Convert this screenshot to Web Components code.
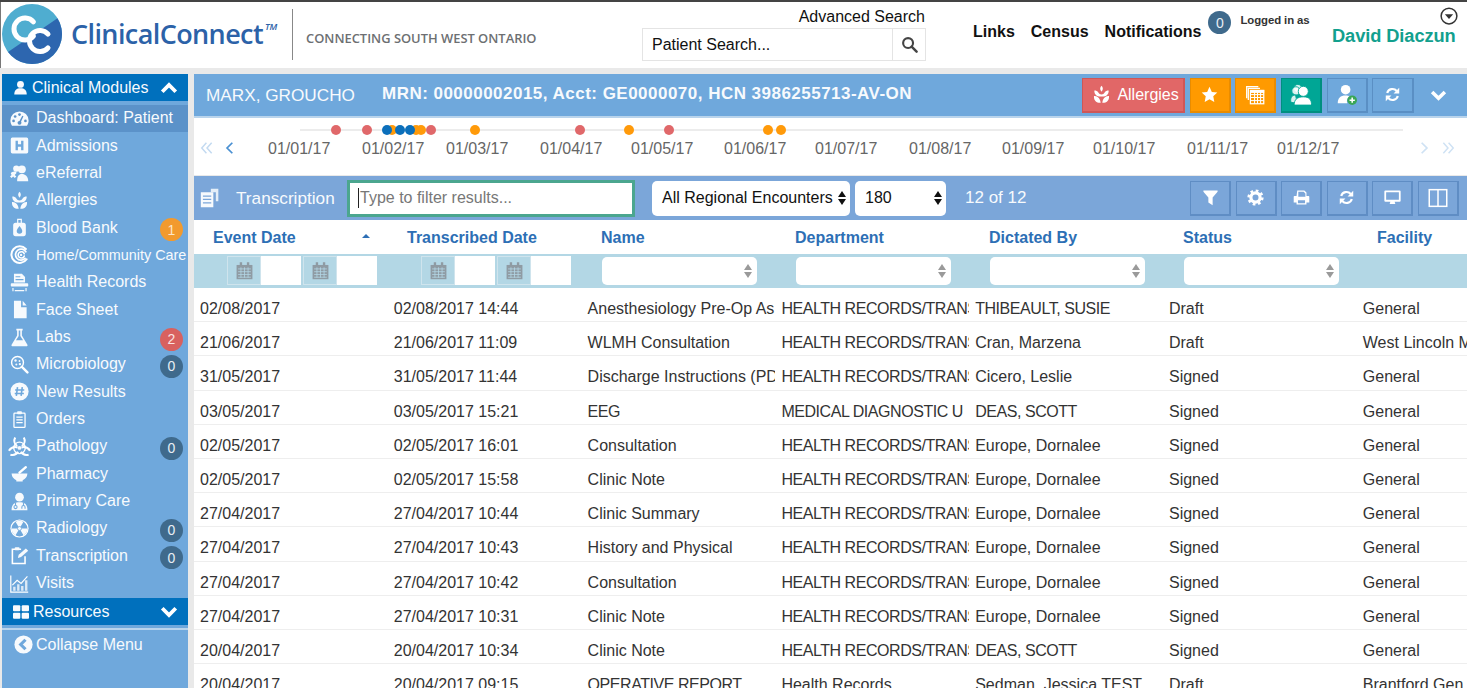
<!DOCTYPE html>
<html lang="en">
<head>
<meta charset="utf-8">
<title>ClinicalConnect</title>
<style>
  html, body { margin: 0; height: 688px; overflow: hidden; background: #e9e9e9; font-family: "Liberation Sans", Arial, sans-serif; }
</style>
</head>
<body>
<cc-app></cc-app>
<script>
const ICONS = {
  user: '<circle cx="12" cy="7" r="5.5"/><path d="M2 23c0-7 4-10 10-10s10 3 10 10z"/>',
  gauge: '<path d="M12 3A11.500 11.500 0 0 0 .5 14.500c0 2.500.8 4.800 2 6.500h19c1.200-1.700 2-4 2-6.500A11.500 11.500 0 0 0 12 3z"/><g fill="#5b92c9"><circle cx="12" cy="7" r="1.700"/><circle cx="6.500" cy="9.500" r="1.700"/><circle cx="4.500" cy="15" r="1.700"/><circle cx="19.500" cy="15" r="1.700"/><circle cx="12" cy="17.500" r="2.500"/><path d="M11 17l4.500-8.500 1.500.7-4 8.800z"/></g>',
  hospital: '<path fill-rule="evenodd" d="M3 2h18a2 2 0 0 1 2 2v16a2 2 0 0 1-2 2H3a2 2 0 0 1-2-2V4a2 2 0 0 1 2-2zM7 6v12h3v-4.500h4V18h3V6h-3v4.500h-4V6z"/>',
  group: '<circle cx="8" cy="7" r="4"/><circle cx="15" cy="8" r="5"/><path d="M9 23c0-6 2-9 6-9s8 3 8 9z"/><path d="M1 13c1-2 4-3 7-2v2l-2 2 2 2-2 2-2-2-2 2-2-2 2-2z"/>',
  plant: '<path d="M12 1c2 2 2.500 4.500 0 7.500C9.500 5.500 10 3 12 1z"/><path d="M3 7c2 0 4 .8 5 2.500C9 11 10 12 12 12s3-1 4-2.500C17 7.800 19 7 21 7c.3 2-.5 5-3 6.500-2 1-4.500 1-6 1s-4 0-6-1C3.500 12 2.700 9 3 7z"/><path d="M2.500 14c3 0 7.500 1 8.500 8.500-4 .5-9-1.500-8.500-8.500zM21.500 14c-3 0-7.500 1-8.500 8.500 4 .5 9-1.500 8.500-8.500z"/>',
  bag: '<path fill-rule="evenodd" d="M9 1h6v5h2c2 0 3 1.500 3 3v11c0 2-1 3-3 3H7c-2 0-3-1-3-3V9c0-1.500 1-3 3-3h2zM10.500 2.500V6h3V2.500zM12 10c-2 3-3.500 4.500-3.500 6.500a3.500 3.500 0 0 0 7 0C15.500 14.500 14 13 12 10z"/>',
  swirl: '<g fill="none" stroke="#fff" stroke-linecap="round"><path stroke-width="2.600" d="M20 5A10.500 10.500 0 1 0 21 18"/><path stroke-width="2.200" d="M20 8.500A7 7 0 1 0 19 17"/><path stroke-width="2" d="M18 11a4 4 0 1 0 0 3"/></g><circle cx="14" cy="12.500" r="1.500"/>',
  shred: '<path fill-rule="evenodd" d="M5 1h10l4 4v7H5zM7 4v1.500h6V4zM7 7.500V9h10V7.500z"/><rect x="1" y="13" width="22" height="4" rx="1"/><path d="M3 19h1.500v4H3zM19.500 19H21v4h-1.500zM6 21.500h12V23H6z"/>',
  file: '<path d="M5 1h9v8h7v14H5z"/><path d="M16 1l5 6h-5z"/>',
  flask: '<path fill-rule="evenodd" d="M8 1h8v2h-1v6.500l7 11.500c.6 1-.2 2-1.200 2H3.200C2.200 23 1.400 22 2 21l7-11.500V3H8zM11 3v7L7.500 15.500h9L13 10V3z"/>',
  microbe: '<circle cx="9.500" cy="9.500" r="7.500" fill="none" stroke="#fff" stroke-width="1.800"/><path d="M15 15l7 7" stroke="#fff" stroke-width="3" stroke-linecap="round"/><g><circle cx="7" cy="7" r="1.500"/><circle cx="12" cy="7.500" r="1.200"/><circle cx="8" cy="12" r="1.300"/><circle cx="12.500" cy="11.500" r="1.500"/></g>',
  hash: '<circle cx="12" cy="12" r="11.500"/><path d="M9.500 6.500l-1.500 11M15.500 6.500l-1.500 11M6.500 10h11.500M6 14.500h11.500" stroke="#6fa8dc" stroke-width="2" fill="none"/>',
  clipboard: '<g fill="none" stroke="#fff" stroke-width="1.600"><rect x="5" y="4" width="14" height="18" rx="1"/><path d="M8 9h8M8 12.500h8M8 16h8"/></g><rect x="9" y="1.500" width="6" height="4" rx="1"/>',
  biohazard: '<g fill="none" stroke="#fff" stroke-width="2.200"><path d="M7.500 2.500a7 7 0 0 0 2 9M16.500 2.500a7 7 0 0 1-2 9"/><path d="M1 16.500a7 7 0 0 1 9-3.500M2.500 20.500a7 7 0 0 0 8-3"/><path d="M23 16.500a7 7 0 0 0-9-3.500M21.500 20.500a7 7 0 0 1-8-3"/><circle cx="12" cy="13.500" r="6" stroke-width="1.400"/></g><circle cx="12" cy="13.500" r="2"/>',
  mortar: '<path d="M2 12h20a10 10 0 0 1-6 8.500V22H8v-1.500A10 10 0 0 1 2 12z"/><path d="M12 11L20 4" stroke="#fff" stroke-width="3" stroke-linecap="round"/>',
  doctor: '<circle cx="12" cy="6.500" r="5.500"/><path d="M2 23c0-7 3-10 10-10s10 3 10 10z"/><g fill="none" stroke="#6fa8dc" stroke-width="1.300"><path d="M7 14v3"/><circle cx="7" cy="19" r="2"/><path d="M17 14v3"/><path d="M15 21v-2a2 2 0 0 1 4 0v2"/></g>',
  radiation: '<circle cx="12" cy="12" r="11.500" fill="#fff"/><circle cx="12" cy="12" r="10" fill="#6fa8dc"/><path d="M12 12L7 3.500a10 10 0 0 1 10 0zM12 12l10 0a10 10 0 0 1-5 8.600zM12 12L7 20.600A10 10 0 0 1 2 12z"/><circle cx="12" cy="12" r="2.500" stroke="#6fa8dc"/>',
  note: '<path d="M14 4H3v18h16v-9" fill="none" stroke="#fff" stroke-width="2"/><rect x="6" y="1.500" width="6" height="4" rx="1"/><path d="M10 15l1-4 9-8 3 3-9 8z"/>',
  chart: '<path d="M1 2v21h22" fill="none" stroke="#fff" stroke-width="1.500"/><path d="M4 21v-5h3v5zM9 21v-8h3v8zM14 21v-6h3v6zM19 21V8h3v13z" opacity=".8"/><path d="M3 14l6-6 5 4 8-9" fill="none" stroke="#fff" stroke-width="1.500"/>',
  grid: '<rect x="0" y="2" width="11" height="9" rx="1.500"/><rect x="13" y="2" width="11" height="9" rx="1.500"/><rect x="0" y="13" width="11" height="9" rx="1.500"/><rect x="13" y="13" width="11" height="9" rx="1.500"/>',
  back: '<circle cx="12" cy="12" r="11.500"/><path d="M14.500 6l-6 6 6 6" fill="none" stroke="#6fa8dc" stroke-width="4"/>',
  up: '<path d="M3 17l9-9 9 9" fill="none" stroke="#fff" stroke-width="5"/>',
  down: '<path d="M3 7l9 9 9-9" fill="none" stroke="#fff" stroke-width="5"/>',
  star: '<path d="M12 1l3.300 7.300 7.700.9-5.700 5.400 1.500 7.900L12 18.600l-6.800 3.900 1.500-7.900L1 9.200l7.700-.9z"/>',
  calendars: '<g fill="none" stroke="#fff"><path stroke-width="1.500" d="M2 16V2h14M4 18V4h14"/><rect x="6.500" y="6.500" width="16" height="16" stroke-width="1.500"/><path stroke-width="1.200" d="M6.500 11.500h16M6.500 15h16M6.500 18.700h16M11.500 6.500v16M15 6.500v16M18.700 6.500v16"/></g><rect x="6" y="6" width="17" height="3.500"/>',
  people: '<g stroke="#00a695" stroke-width="1"><circle cx="8.500" cy="5" r="4.500" fill-opacity=".85"/><circle cx="6.500" cy="7.500" r="4.500" fill-opacity=".85"/><path fill-opacity=".85" d="M1 20c-1-5 1-8 5-8l2 9z"/><circle cx="14.500" cy="8" r="5.500"/><path d="M4.500 23c0-6 3.500-9 10-9s9 3 9 9z"/></g>',
  useradd: '<circle cx="11" cy="6.500" r="5.500"/><path d="M2 22c0-6 3-9 9-9 2 0 3.500.4 4.700 1.100A6 6 0 0 0 13 22z"/><circle cx="18.500" cy="18.500" r="5.500" fill="#3aa655"/><path d="M18.500 15.500v6M15.500 18.500h6" stroke="#fff" stroke-width="1.800"/>',
  refresh: '<g fill="none" stroke="#fff" stroke-width="3"><path d="M4.500 10A7.800 7.800 0 0 1 18 7"/><path d="M19.500 14A7.800 7.800 0 0 1 6 17"/></g><path d="M21.500 2.500v8h-8zM2.500 21.500v-8h8z"/>',
  docs: '<path d="M13 1h9v15h-3V5h-6z" opacity=".85"/><path fill-rule="evenodd" d="M1 5h15v18H1zM3.500 9v1.500h10V9zM3.500 13v1.500h10V13zM3.500 17v1.500h10V17z"/>',
  funnel: '<path d="M2 2h20v2l-7 8v11l-6-4v-7L2 4z"/>',
  gear: '<circle cx="12" cy="12" r="6.500" fill="none" stroke="#fff" stroke-width="4.500"/><circle cx="12" cy="12" r="9.700" fill="none" stroke="#fff" stroke-width="3.500" stroke-dasharray="3.800 3.820"/>',
  printer: '<path fill-rule="evenodd" d="M6 2h10l3 3v5h3a1 1 0 0 1 1 1v8h-4v3H5v-3H1v-8a1 1 0 0 1 1-1h3zM7.500 4v7h10V6.500L15 4zM7 16v4h10v-4z"/>',
  monitor: '<path fill-rule="evenodd" d="M2 2h20a1.500 1.500 0 0 1 1.500 1.500v13A1.500 1.500 0 0 1 22 18h-7l1 3H8l1-3H2a1.500 1.500 0 0 1-1.500-1.500v-13A1.500 1.500 0 0 1 2 2zM3 4.500V15h18V4.500z"/>',
  columns: '<rect x="1.500" y="2" width="21" height="20" fill="none" stroke="#fff" stroke-width="1.800"/><path d="M12 2v20" stroke="#fff" stroke-width="1.800"/>',
  calendar: '<path d="M2 5h20v18H2z"/><path d="M6 1.500h3V6H6zM15 1.500h3V6h-3z"/><path d="M4 10h16M4 13.500h16M4 17h16M4 20.500h16M7.500 8v13M12 8v13M16.500 8v13" stroke="#b3d7e5" stroke-width="1"/>',
  search: '<circle cx="10" cy="10" r="7" fill="none" stroke="currentColor" stroke-width="3"/><path d="M15 15l7 7" stroke="currentColor" stroke-width="3.500" stroke-linecap="round"/>',
  caretcircle: '<circle cx="12" cy="12" r="10.500" fill="none" stroke="currentColor" stroke-width="2"/><path d="M6.500 9.500h11L12 16z"/>',
  chevrons: '<path d="M11 3l-8 9 8 9M20 3l-8 9 8 9" fill="none" stroke="currentColor" stroke-width="2.500"/>',
  chevron: '<path d="M16 3l-9 9 9 9" fill="none" stroke="currentColor" stroke-width="3"/>'
};

class CcIcon extends HTMLElement {
  connectedCallback() {
    const size = this.getAttribute("size") || 18;
    const flip = this.hasAttribute("flip") ? "transform: scaleX(-1);" : "";
    this.attachShadow({ mode: "open" });
    this.shadowRoot.innerHTML = `
      <style>
        :host { display: inline-flex; flex: none; width: ${size}px; height: ${size}px; fill: currentColor; color: inherit; }
        svg { width: 100%; height: 100%; display: block; ${flip} }
      </style>
      <svg viewBox="0 0 24 24">${ICONS[this.getAttribute("name")] || ""}</svg>`;
  }
}
customElements.define("cc-icon", CcIcon);

class CcBadge extends HTMLElement {
  constructor() {
    super();
    this.attachShadow({ mode: "open" });
    this.shadowRoot.innerHTML = `
      <style>
        :host { display: inline-flex; flex: none; align-items: center; justify-content: center; width: 23px; height: 23px; border-radius: 50%; background: #3f6a8c; color: #e8eef4; font-size: 14px; }
        :host([tone="orange"]) { background: #f29a2e; color: #fde6c8; }
        :host([tone="red"]) { background: #d8615f; color: #fbe4e3; }
      </style>
      <slot></slot>`;
  }
}
customElements.define("cc-badge", CcBadge);

class CcHeader extends HTMLElement {
  constructor() {
    super();
    this.attachShadow({ mode: "open" });
    this.shadowRoot.innerHTML = `
      <style>
        :host { display: flex; height: 66px; background: #fff; border-top: 2px solid #444; color: #111; box-shadow: inset 1px 0 0 #777; }
        .logo { flex: none; margin: 2px 0 0 2px; width: 60px; height: 60px; }
        .brand { flex: none; margin: 15px 0 0 9px; font: 600 27px/34px "Open Sans", sans-serif; color: #2c62a8; letter-spacing: -.6px; width: 221px; white-space: nowrap; }
        .brand sup { font-size: 9px; font-style: italic; line-height: 0; vertical-align: 14px; letter-spacing: 0; margin-left: 2px; }
        .rule { flex: none; width: 1px; height: 51px; margin-top: 7px; background: #888; }
        .tag { flex: none; margin: 28px 0 0 13px; width: 336px; font: 600 12.9px/16px "Open Sans", sans-serif; color: #6d6f72; white-space: nowrap; }
        .search { flex: none; width: 284px; display: flex; flex-direction: column; }
        .adv { text-align: right; font-size: 16px; line-height: 18px; margin: 6px 1px 2px 0; }
        .box { height: 31px; display: flex; border: 1px solid #e4e4e4; font-size: 16px; align-items: center; }
        .box span { flex: 1; padding-left: 9px; }
        .box div { width: 32px; height: 100%; border-left: 1px solid #e4e4e4; display: flex; align-items: center; justify-content: center; color: #444; }
        .links { flex: none; display: flex; gap: 16px; margin: 20px 0 0 47px; font-weight: 700; font-size: 16px; line-height: 20px; }
        cc-badge { margin: 9px 0 0 7px; }
        .who { flex: 1; position: relative; margin-left: 9px; display: flex; flex-direction: column; }
        .who small { font-size: 11.4px; font-weight: 700; line-height: 14px; margin-top: 11px; color: #333; letter-spacing: -.1px; }
        .who strong { font-size: 18.3px; line-height: 22px; color: #12a08e; margin: -2px 0 0 91.5px; white-space: nowrap; letter-spacing: -.1px; }
        .caret { position: absolute; right: 9px; top: 5px; color: #333; }
      </style>
      <svg class="logo" viewBox="0 0 60 60">
        <circle cx="30" cy="30" r="30" fill="#4fadd0"/>
        <path d="M6 48L55.500 14.200A30 30 0 0 1 6 48z" fill="#2d66af"/>
        <g fill="none" stroke="#fff" stroke-width="5" stroke-linecap="round">
          <path d="M31.400 17.900A11 11 0 1 0 31.400 32.100"/>
          <path d="M46 30.200A10.500 10.500 0 1 0 46 43.800"/>
        </g>
      </svg>
      <div class="brand">ClinicalConnect<sup>TM</sup></div>
      <div class="rule"></div>
      <div class="tag">CONNECTING SOUTH WEST ONTARIO</div>
      <div class="search">
        <div class="adv">Advanced Search</div>
        <div class="box"><span>Patient Search...</span><div><cc-icon name="search" size="17"></cc-icon></div></div>
      </div>
      <div class="links"><a>Links</a><a>Census</a><a>Notifications</a></div>
      <cc-badge>0</cc-badge>
      <div class="who">
        <small>Logged in as</small>
        <strong>David Diaczun</strong>
        <cc-icon class="caret" name="caretcircle" size="18"></cc-icon>
      </div>`;
  }
}
customElements.define("cc-header", CcHeader);

class CcNavItem extends HTMLElement {
  constructor() {
    super();
    this.attachShadow({ mode: "open" });
    this.shadowRoot.innerHTML = `
      <style>
        :host { display: flex; align-items: center; height: 27.35px; color: #f7fafd; font-size: 16px; white-space: nowrap; }
        :host([active]) { background: #5b92c9; }
        .ic { flex: none; width: 34px; display: flex; justify-content: center; }
        .tx { flex: 1; min-width: 0; }
        :host([small]) .tx { font-size: 14.4px; }
        ::slotted(cc-badge) { margin: 4px 5px 0 0; }
      </style>
      <span class="ic"><slot name="icon"></slot></span>
      <span class="tx"><slot></slot></span>
      <slot name="badge"></slot>`;
  }
}
customElements.define("cc-nav-item", CcNavItem);

class CcNavHead extends HTMLElement {
  constructor() {
    super();
    this.attachShadow({ mode: "open" });
    this.shadowRoot.innerHTML = `
      <style>
        :host { display: flex; align-items: center; height: 27px; background: #0070bd; color: #f7fafd; font-size: 16px; padding: 0 10px 0 11px; gap: 4px; }
        .tx { flex: 1; }
      </style>
      <slot name="icon"></slot><span class="tx"><slot></slot></span><slot name="toggle"></slot>`;
  }
}
customElements.define("cc-nav-head", CcNavHead);

const NAV = [
  ["gauge", "Dashboard: Patient", "", "active"],
  ["hospital", "Admissions"],
  ["group", "eReferral"],
  ["plant", "Allergies"],
  ["bag", "Blood Bank", "1:orange"],
  ["swirl", "Home/Community Care", "", "small"],
  ["shred", "Health Records"],
  ["file", "Face Sheet"],
  ["flask", "Labs", "2:red"],
  ["microbe", "Microbiology", "0:"],
  ["hash", "New Results"],
  ["clipboard", "Orders"],
  ["biohazard", "Pathology", "0:"],
  ["mortar", "Pharmacy"],
  ["doctor", "Primary Care"],
  ["radiation", "Radiology", "0:"],
  ["note", "Transcription", "0:"],
  ["chart", "Visits"]
];

class CcSidebar extends HTMLElement {
  constructor() {
    super();
    this.attachShadow({ mode: "open" });
    const items = NAV.map(([icon, label, badge, flag]) => {
      let b = "";
      if (badge) {
        const [n, tone] = badge.split(":");
        b = `<cc-badge slot="badge" tone="${tone}">${n}</cc-badge>`;
      }
      return `<cc-nav-item ${flag || ""}><cc-icon slot="icon" name="${icon}" size="${icon === "biohazard" ? 23 : 19}"></cc-icon>${label}${b}</cc-nav-item>`;
    }).join("");
    this.shadowRoot.innerHTML = `
      <style>
        :host { display: block; flex: none; width: 186px; margin-left: 2px; background: #6fa8dc; }
        .list { margin-top: 3.6px; margin-bottom: 1.4px; }
        .sep { height: 2px; background: #b9d4ec; margin-top: 3px; }
        .collapse { display: flex; align-items: center; gap: 3px; margin-top: 1px; padding-left: 12px; height: 27px; color: #f7fafd; font-size: 16px; }
      </style>
      <cc-nav-head><cc-icon slot="icon" name="user" size="15"></cc-icon>Clinical Modules<cc-icon slot="toggle" name="up" size="18"></cc-icon></cc-nav-head>
      <div class="list">${items}</div>
      <cc-nav-head><cc-icon slot="icon" name="grid" size="16"></cc-icon>Resources<cc-icon slot="toggle" name="down" size="18"></cc-icon></cc-nav-head>
      <div class="sep"></div>
      <div class="collapse"><cc-icon name="back" size="19"></cc-icon>Collapse Menu</div>`;
  }
}
customElements.define("cc-sidebar", CcSidebar);

class CcPatientBar extends HTMLElement {
  constructor() {
    super();
    this.attachShadow({ mode: "open" });
    const btn = (cls, icon, size) => `<div class="btn ${cls}"><cc-icon name="${icon}" size="${size}"></cc-icon></div>`;
    this.shadowRoot.innerHTML = `
      <style>
        :host { display: flex; align-items: center; height: 42px; background: #6fa8dc; color: #f7fafd; padding-left: 12px; border-bottom: 2px solid #b9d4ec; box-sizing: content-box; }
        .name { font-size: 17.2px; width: 176px; white-space: nowrap; margin-top: 1px; }
        .ids { flex: 1; font-weight: 700; font-size: 17px; letter-spacing: .48px; white-space: nowrap; margin-top: -3px; }
        .btn { box-sizing: border-box; width: 41.2px; height: 35px; margin-left: 4.5px; display: flex; align-items: center; justify-content: center; border: 1px solid #5a8fc4; border-width: 1px 2px 2px 1px; background: #6fa8dc; color: #fff; }
        .allergy { width: 103px; margin: 0; background: #e16767; border-color: #cf5757; font-size: 16px; gap: 6px; padding-left: 5px; }
        .orange { background: #ff9a00; border-color: #e98c00; }
        .teal { background: #00a695; border-color: #008f80; }
        .more { width: 42px; margin: 0 8px 0 3.5px; border: 0; background: none; }
      </style>
      <div class="name">MARX, GROUCHO</div>
      <div class="ids">MRN: 00000002015, Acct: GE0000070, HCN 3986255713-AV-ON</div>
      <div class="btn allergy"><cc-icon name="plant" size="19"></cc-icon>Allergies</div>
      ${btn("orange", "star", 17)}${btn("orange", "calendars", 20)}${btn("teal", "people", 22)}
      ${btn("", "useradd", 21)}${btn("", "refresh", 17)}${btn("more", "down", 17)}`;
  }
}
customElements.define("cc-patient-bar", CcPatientBar);

const MONTHS = [[94, "01/01/17"], [84, "01/02/17"], [94, "01/03/17"], [91, "01/04/17"], [93, "01/05/17"], [91, "01/06/17"], [94, "01/07/17"], [93, "01/08/17"], [91, "01/09/17"], [94, "01/10/17"], [90, "01/11/17"], [90, "01/12/17"]];
const DOTS = [[336, "r"], [367, "r"], [392, "o"], [387, "b"], [416, "o"], [421, "o"], [400, "b"], [410, "b"], [431, "r"], [475, "o"], [580, "r"], [629, "o"], [669, "r"], [768, "o"], [781, "o"]];

class CcTimeline extends HTMLElement {
  constructor() {
    super();
    this.attachShadow({ mode: "open" });
    const dots = DOTS.map(([x, c]) => `<i class="${c}" style="left:${x - 199}px"></i>`).join("");
    const labels = MONTHS.map(([w, t]) => `<span style="width:${w}px">${t}</span>`).join("");
    this.shadowRoot.innerHTML = `
      <style>
        :host { display: block; position: relative; height: 57px; background: #fff; color: #666; font-size: 16px; }
        .line { position: absolute; left: 106px; right: 64px; top: 11px; height: 2px; background: #ececec; }
        i { position: absolute; top: 7px; width: 10px; height: 10px; border-radius: 50%; }
        .r { background: #e0686a; } .o { background: #ff9a0a; } .b { background: #0b6fbb; }
        .row { display: flex; align-items: center; height: 100%; padding-top: 5px; box-sizing: border-box; }
        .row span { flex: none; white-space: nowrap; }
        .nav { flex: none; display: flex; align-items: center; color: #4a90d2; }
        .left { width: 74px; padding-left: 6px; box-sizing: border-box; gap: 9px; margin-top: -3px; }
        .right { margin-left: 50px; gap: 10px; margin-top: -3px; color: #cfe2f4; }
        .faint { color: #c3daf1; }
      </style>
      <div class="line"></div>${dots}
      <div class="row">
        <div class="nav left"><cc-icon class="faint" name="chevrons" size="14"></cc-icon><cc-icon name="chevron" size="14"></cc-icon></div>
        ${labels}
        <div class="nav right"><cc-icon name="chevron" size="14" flip></cc-icon><cc-icon name="chevrons" size="14" flip></cc-icon></div>
      </div>`;
  }
}
customElements.define("cc-timeline", CcTimeline);

class CcSelect extends HTMLElement {
  constructor() {
    super();
    this.attachShadow({ mode: "open" });
    this.shadowRoot.innerHTML = `
      <style>
        :host { display: flex; flex: none; box-sizing: border-box; align-items: center; justify-content: space-between; background: #fff; border-radius: 5px; color: #111; font-size: 16px; padding: 0 4px 0 10px; white-space: nowrap; }
        .ar { display: flex; flex-direction: column; gap: 2px; }
        .ar b { width: 0; height: 0; border: 4px solid transparent; border-top: 0; border-bottom: 6px solid var(--arrow, #111); }
        .ar b + b { transform: rotate(180deg); }
      </style>
      <span><slot></slot></span><span class="ar"><b></b><b></b></span>`;
  }
}
customElements.define("cc-select", CcSelect);

class CcToolbar extends HTMLElement {
  constructor() {
    super();
    this.attachShadow({ mode: "open" });
    const tools = ["funnel", "gear", "printer", "refresh", "monitor", "columns"]
      .map((n) => `<div class="tool"><cc-icon name="${n}" size="${n === "columns" ? 20 : 17}"></cc-icon></div>`).join("");
    this.shadowRoot.innerHTML = `
      <style>
        :host { display: flex; align-items: center; height: 44px; background: #7ba6d9; color: #f7fafd; font-size: 17.2px; padding-left: 6px; margin-top: 1px; }
        .title { flex: none; width: 147px; display: flex; align-items: center; gap: 16px; }
        .filter { flex: none; box-sizing: border-box; width: 288px; height: 37px; background: #fff; border: 3px solid #4ba68f; color: #777; font-size: 16px; display: flex; align-items: center; padding-left: 8px; }
        .filter::before { content: ""; width: 1px; height: 20px; background: #222; margin-right: 1px; }
        cc-select { height: 35px; }
        .enc { width: 198px; margin-left: 17px; }
        .num { width: 91px; margin-left: 5px; }
        .count { flex: 1; margin-left: 19px; font-size: 17px; }
        .tool { box-sizing: border-box; width: 41px; height: 35px; margin-right: 4.600px; display: flex; align-items: center; justify-content: center; border: 1px solid #5f8dc4; border-width: 1px 2px 2px 1px; color: #fff; }
        .tool:last-child { margin-right: 8px; }
      </style>
      <div class="title"><cc-icon name="docs" size="20"></cc-icon>Transcription</div>
      <div class="filter">Type to filter results...</div>
      <cc-select class="enc">All Regional Encounters</cc-select>
      <cc-select class="num">180</cc-select>
      <div class="count">12 of 12</div>
      ${tools}`;
  }
}
customElements.define("cc-toolbar", CcToolbar);

const HEALTH = "HEALTH RECORDS/TRANS";
const ROWS = [
  ["02/08/2017", "02/08/2017 14:44", "Anesthesiology Pre-Op As", HEALTH, "THIBEAULT, SUSIE", "Draft", "General"],
  ["21/06/2017", "21/06/2017 11:09", "WLMH Consultation", HEALTH, "Cran, Marzena", "Draft", "West Lincoln M"],
  ["31/05/2017", "31/05/2017 11:44", "Discharge Instructions (PD", HEALTH, "Cicero, Leslie", "Signed", "General"],
  ["03/05/2017", "03/05/2017 15:21", "EEG", "MEDICAL DIAGNOSTIC U", "DEAS, SCOTT", "Signed", "General"],
  ["02/05/2017", "02/05/2017 16:01", "Consultation", HEALTH, "Europe, Dornalee", "Signed", "General"],
  ["02/05/2017", "02/05/2017 15:58", "Clinic Note", HEALTH, "Europe, Dornalee", "Signed", "General"],
  ["27/04/2017", "27/04/2017 10:44", "Clinic Summary", HEALTH, "Europe, Dornalee", "Signed", "General"],
  ["27/04/2017", "27/04/2017 10:43", "History and Physical", HEALTH, "Europe, Dornalee", "Signed", "General"],
  ["27/04/2017", "27/04/2017 10:42", "Consultation", HEALTH, "Europe, Dornalee", "Signed", "General"],
  ["27/04/2017", "27/04/2017 10:31", "Clinic Note", HEALTH, "Europe, Dornalee", "Signed", "General"],
  ["20/04/2017", "20/04/2017 10:34", "Clinic Note", HEALTH, "DEAS, SCOTT", "Signed", "General"],
  ["20/04/2017", "20/04/2017 09:15", "OPERATIVE REPORT", "Health Records", "Sedman, Jessica TEST", "Draft", "Brantford Gen"]
];
const COLS = ["Event Date", "Transcribed Date", "Name", "Department", "Dictated By", "Status", "Facility"];

class CcGrid extends HTMLElement {
  constructor() {
    super();
    this.attachShadow({ mode: "open" });
    const date = `<div class="date"><span><cc-icon name="calendar" size="19"></cc-icon></span></div>`;
    const filters = [0, 1, 2, 3, 4, 5, 6].map((i) => {
      if (i < 2) return `<div class="fc">${date}${date}</div>`;
      if (i < 6) return `<div class="fc"><cc-select class="drop"></cc-select></div>`;
      return `<div class="fc"></div>`;
    }).join("");
    const head = COLS.map((c, i) => `<div class="hc">${c}${i === 0 ? '<b class="sort"></b>' : ""}</div>`).join("");
    const cell = (c) => `<div class="td${/[A-Z]{3}/.test(c) && !/[a-z]/.test(c) ? " caps" : ""}">${c}</div>`;
    const rows = ROWS.map((r) => `<div class="row">${r.map(cell).join("")}</div>`).join("");
    this.shadowRoot.innerHTML = `
      <style>
        :host { display: block; flex: 1; min-height: 0; overflow: hidden; background: #fff; color: #333; font-size: 16px; }
        .head, .filters { display: grid; grid-template-columns: repeat(7, 194px); }
        .row { display: grid; grid-template-columns: repeat(7, 193.8px); }
        .head { height: 34px; align-items: center; padding-top: 1px; box-sizing: border-box; }
        .hc { position: relative; padding-left: 19px; font-weight: 700; color: #2d6fb5; white-space: nowrap; }
        .sort { position: absolute; left: 168px; top: 5px; border: 4px solid transparent; border-top: 0; border-bottom: 4px solid #2d6fb5; }
        .filters { height: 34px; background: #b3d7e5; }
        .fc { display: flex; gap: 2px; align-items: flex-start; padding: 2px 0 0 33px; }
        .date { width: 74px; height: 29px; background: #fff; display: flex; }
        .date span { box-sizing: border-box; width: 34px; display: flex; align-items: center; justify-content: center; background: #b3d7e5; border: 1px solid #cfe4ed; color: #8f9ba3; }
        .drop { --arrow: #9a9a9a; width: 155px; height: 28px; margin: 1px 0 0 -13px; padding-right: 5px; }
        .row { height: 34.2px; box-sizing: border-box; border-bottom: 1px solid #eee; align-items: center; padding-top: 9px; }
        .td { padding-left: 6px; overflow: hidden; white-space: nowrap; }
        .caps { letter-spacing: -.45px; }
      </style>
      <div class="head">${head}</div>
      <div class="filters">${filters}</div>
      ${rows}`;
  }
}
customElements.define("cc-grid", CcGrid);

class CcApp extends HTMLElement {
  constructor() {
    super();
    this.attachShadow({ mode: "open" });
    this.shadowRoot.innerHTML = `
      <style>
        :host { display: block; height: 688px; overflow: hidden; }
        .body { display: flex; gap: 6px; height: 614px; margin-top: 6px; }
        cc-sidebar { height: 100%; }
        main { flex: 1; min-width: 0; display: flex; flex-direction: column; overflow: hidden; }
        cc-timeline { flex: none; }
        cc-toolbar { flex: none; }
      </style>
      <cc-header></cc-header>
      <div class="body">
        <cc-sidebar></cc-sidebar>
        <main>
          <cc-patient-bar></cc-patient-bar>
          <cc-timeline></cc-timeline>
          <cc-toolbar></cc-toolbar>
          <cc-grid></cc-grid>
        </main>
      </div>`;
  }
}
customElements.define("cc-app", CcApp);
</script>
</body>
</html>
